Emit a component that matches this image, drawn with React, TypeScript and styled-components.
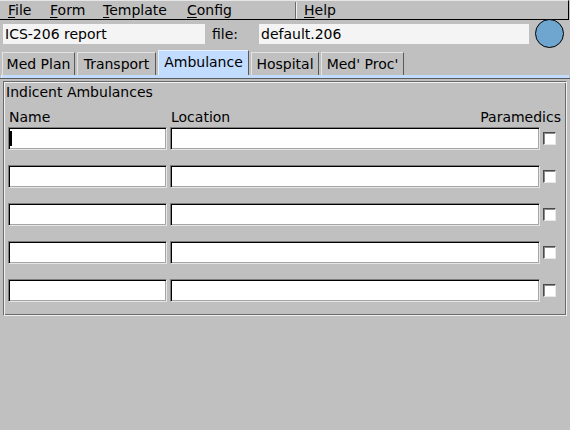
import React from "react";
import styled, { createGlobalStyle } from "styled-components";

const Global = createGlobalStyle`
  html, body { margin: 0; padding: 0; background: #c0c0c0; }
  body { font-family: "DejaVu Sans", "Liberation Sans", sans-serif; font-size: 14px; color: #000; }
  * { box-sizing: border-box; }
`;

const Window = styled.div`
  width: 570px;
  height: 430px;
  background: #c0c0c0;
  display: flex;
  flex-direction: column;
  overflow: hidden;
`;

const MenuBar = styled.div`
  height: 20px;
  display: flex;
  align-items: center;
  border-top: 1px solid #e6e6e6;
  border-bottom: 1px solid #000;
  border-right: 1px solid #000;
  width: 569px;
  padding-left: 1px;
`;

const MenuItem = styled.div<{ $w: number; $pad?: number }>`
  width: ${(p) => p.$w}px;
  padding-left: ${(p) => p.$pad ?? 7}px;
  line-height: 18px;
  white-space: nowrap;
`;

const U = styled.span`
  text-decoration: underline;
  text-underline-offset: 2px;
`;

const MenuDivider = styled.div`
  width: 2px;
  height: 17px;
  border-left: 1px solid #6a6a6a;
  border-right: 1px solid #f0f0f0;
  margin-right: 2px;
`;

const InfoRow = styled.div`
  height: 30px;
  display: flex;
  align-items: flex-start;
  padding: 4px 0 0 3px;
`;

const FlatField = styled.div<{ $w: number }>`
  width: ${(p) => p.$w}px;
  height: 20px;
  background: #f4f4f4;
  line-height: 20px;
  padding-left: 2px;
  white-space: nowrap;
`;

const FileLabel = styled.span`
  margin-left: 7px;
  width: 47px;
  line-height: 20px;
`;

const Light = styled.div`
  width: 29px;
  height: 29px;
  border-radius: 50%;
  background: #6ea6cf;
  border: 1px solid #000;
  margin-left: 6px;
  margin-top: -5px;
`;

const TabRow = styled.div`
  height: 25px;
  display: flex;
  align-items: flex-end;
  gap: 2px;
  padding-left: 2px;
`;

const Tab = styled.div<{ $active?: boolean; $w: number }>`
  width: ${(p) => p.$w}px;
  height: ${(p) => (p.$active ? 25 : 23)}px;
  text-align: center;
  background: ${(p) => (p.$active ? "#c2dcff" : "#c0c0c0")};
  border-top: 1px solid ${(p) => (p.$active ? "#e8f2ff" : "#e4e4e4")};
  border-left: 1px solid ${(p) => (p.$active ? "#e8f2ff" : "#e4e4e4")};
  border-right: 1px solid #5a5a5a;
  line-height: 22px;
  white-space: nowrap;
`;

const TabStrip = styled.div`
  height: 3px;
  background: #c2dcff;
  margin: 0 1px 0 1px;
  border-left: 1px solid #e8f2ff;
`;

const TabRule = styled.div`
  height: 1px;
  background: #5a5a5a;
`;

const Panel = styled.div`
  margin: 2px 3px 0 3px;
  height: 235px;
  border: 1px solid #6a6a6a;
  border-right-color: #f0f0f0;
  border-bottom-color: #f0f0f0;
  box-shadow: inset 1px 1px 0 #f0f0f0, inset -1px -1px 0 #6a6a6a;
  padding: 1px 5px 0 4px;
  display: flex;
  flex-direction: column;
`;

const PanelTitle = styled.div`
  height: 18px;
  line-height: 18px;
  margin-left: -2px;
`;

const Grid = styled.div`
  display: grid;
  grid-template-columns: 159px 370px 13px;
  column-gap: 3px;
  row-gap: 15px;
  margin-top: 7px;
  align-items: center;
`;

const HeadLabel = styled.div<{ $right?: boolean }>`
  height: 18px;
  line-height: 18px;
  margin-bottom: -14px;
  margin-left: 1px;
  margin-right: ${(p) => (p.$right ? -5 : 0)}px;
  display: flex;
  justify-content: ${(p) => (p.$right ? "flex-end" : "flex-start")};
  white-space: nowrap;
`;

const Input = styled.div`
  height: 23px;
  background: #fff;
  border: 1px solid;
  border-color: #7e7e7e #e6e6e6 #e6e6e6 #7e7e7e;
  box-shadow: inset 1px 1px 0 #000, inset -1px -1px 0 #a6a6a6;
  position: relative;
`;

const Caret = styled.span`
  position: absolute;
  left: 1px;
  top: 3px;
  width: 2px;
  height: 15px;
  background: #000;
`;

const Check = styled.div`
  width: 13px;
  height: 13px;
  background: #fff;
  border: 1px solid;
  border-color: #4a4a4a #e8e8e8 #e8e8e8 #4a4a4a;
  box-shadow: inset 1px 1px 0 #8a8a8a;
`;

const rows = [0, 1, 2, 3, 4];

export default function App() {
  return (
    <Window>
      <Global />
      <MenuBar>
        <MenuItem $w={42}><U>F</U>ile</MenuItem>
        <MenuItem $w={53}><U>F</U>orm</MenuItem>
        <MenuItem $w={84}><U>T</U>emplate</MenuItem>
        <MenuItem $w={115}><U>C</U>onfig</MenuItem>
        <MenuDivider />
        <MenuItem $w={200} $pad={5}><U>H</U>elp</MenuItem>
      </MenuBar>
      <InfoRow>
        <FlatField $w={202}>ICS-206 report</FlatField>
        <FileLabel>file:</FileLabel>
        <FlatField $w={270}>default.206</FlatField>
        <Light />
      </InfoRow>
      <TabRow>
        <Tab $w={73}>Med Plan</Tab>
        <Tab $w={79}>Transport</Tab>
        <Tab $w={91} $active>Ambulance</Tab>
        <Tab $w={68}>Hospital</Tab>
        <Tab $w={83}>Med' Proc'</Tab>
      </TabRow>
      <TabStrip />
      <TabRule />
      <Panel>
        <PanelTitle>Indicent Ambulances</PanelTitle>
        <Grid>
          <HeadLabel>Name</HeadLabel>
          <HeadLabel>Location</HeadLabel>
          <HeadLabel $right>Paramedics</HeadLabel>
          {rows.map((r) => (
            <React.Fragment key={r}>
              <Input>{r === 0 && <Caret />}</Input>
              <Input />
              <Check />
            </React.Fragment>
          ))}
        </Grid>
      </Panel>
    </Window>
  );
}
